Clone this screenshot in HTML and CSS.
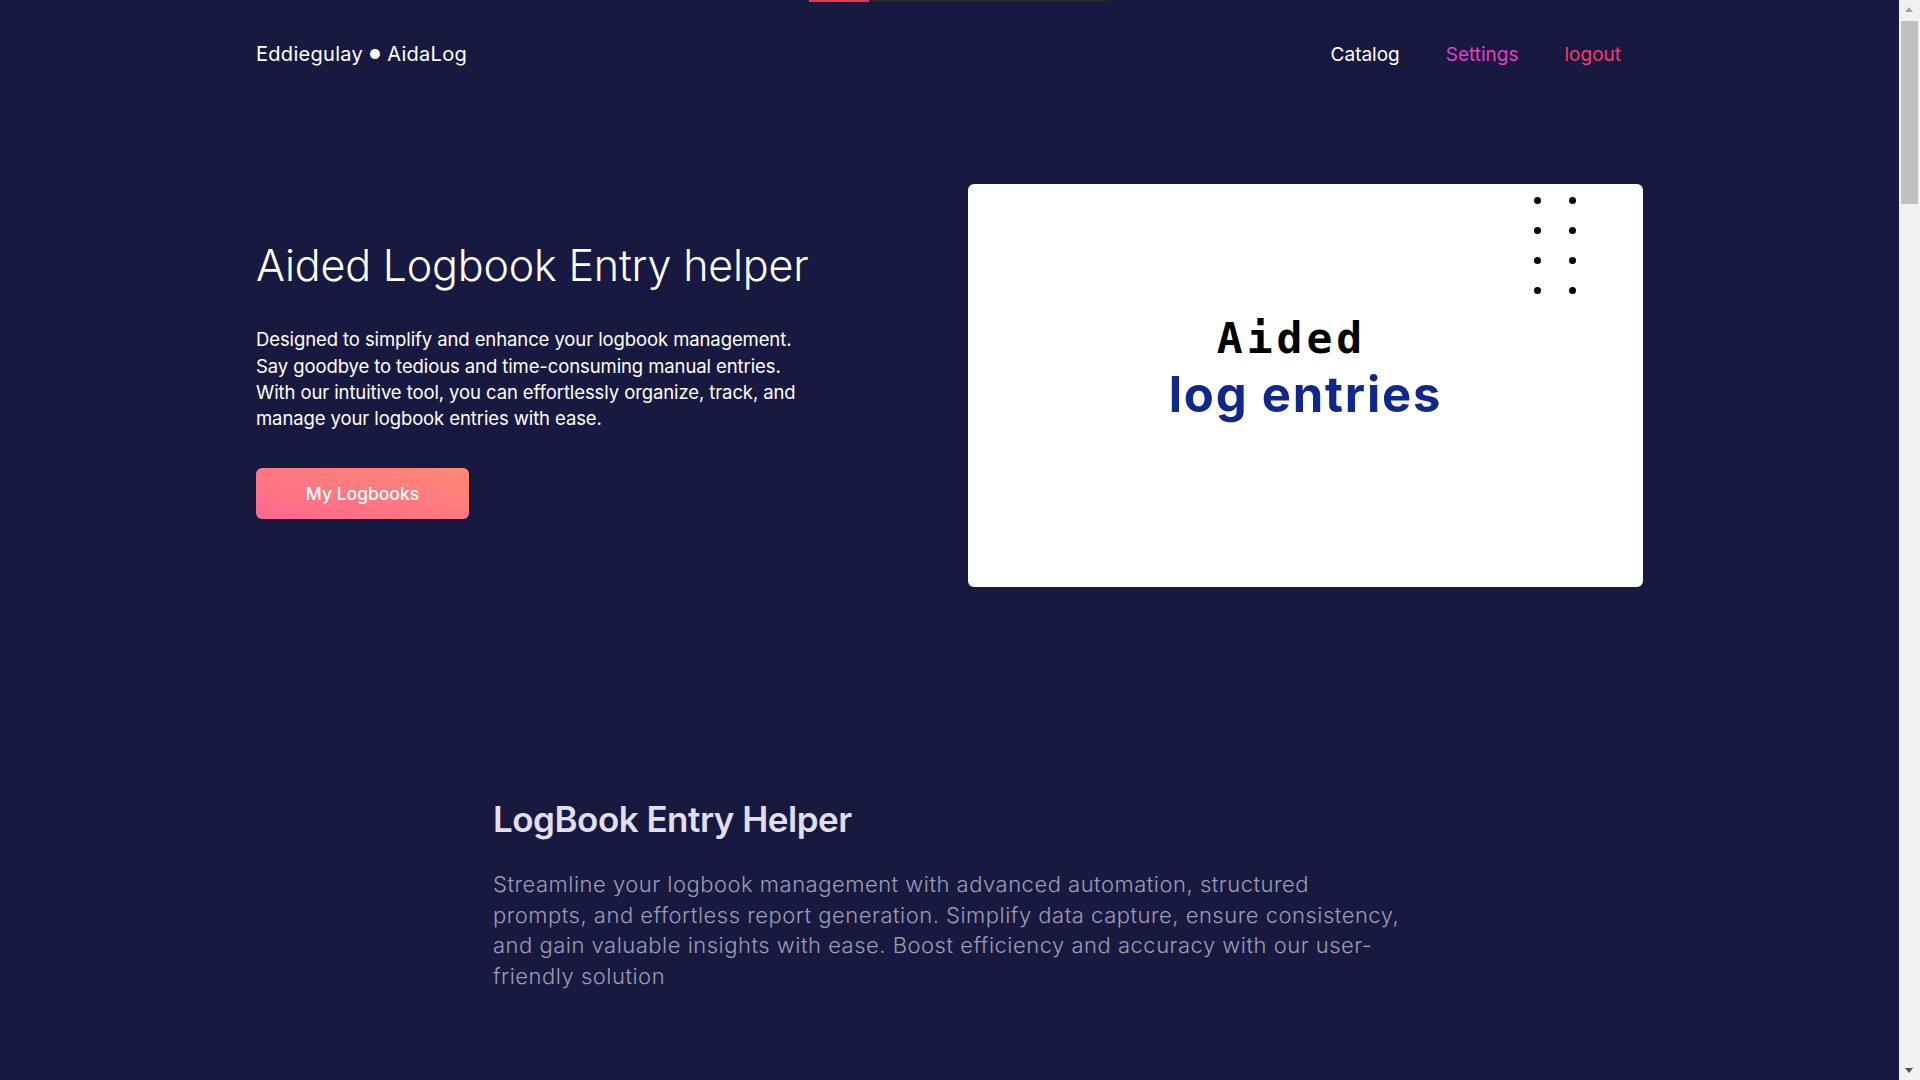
FILE: index.html
```html
<!DOCTYPE html>
<html lang="en">
<head>
<meta charset="utf-8">
<title>AidaLog</title>
<link rel="stylesheet" href="styles.css">
</head>
<body>
<div class="progress"><span class="progress-fill"></span></div>
<div class="scrollbar" aria-hidden="true">
  <span class="scroll-arrow scroll-up"></span>
  <span class="scroll-thumb"></span>
  <span class="scroll-arrow scroll-down"></span>
</div>
<div class="page">
  <header class="header container">
    <a class="brand" href="#">Eddiegulay <span class="brand-dot">●</span> AidaLog</a>
    <nav class="nav">
      <a class="nav-link nav-catalog" href="#">Catalog</a>
      <a class="nav-link nav-settings" href="#">Settings</a>
      <a class="nav-link nav-logout" href="#">logout</a>
    </nav>
  </header>

  <section class="hero container">
    <div class="hero-text">
      <h1 class="hero-title">Aided Logbook Entry helper</h1>
      <p class="hero-lead">Designed to simplify and enhance your logbook management. Say goodbye to tedious and time-consuming manual entries. With our intuitive tool, you can effortlessly organize, track, and manage your logbook entries with ease.</p>
      <a class="btn-primary" href="#">My Logbooks</a>
    </div>
    <div class="hero-card">
      <div class="dots">
        <span></span><span></span><span></span><span></span>
        <span></span><span></span><span></span><span></span>
      </div>
      <div class="card-mono">Aided</div>
      <div class="card-blue">log entries</div>
    </div>
  </section>

  <section class="feature">
    <h2 class="feature-title">LogBook Entry Helper</h2>
    <p class="feature-text">Streamline your logbook management with advanced automation, structured prompts, and effortless report generation. Simplify data capture, ensure consistency, and gain valuable insights with ease. Boost efficiency and accuracy with our user-friendly solution</p>
  </section>
</div>
</body>
</html>
```
FILE: styles.css
```css
* { box-sizing: border-box; }
html, body { margin: 0; padding: 0; }
body {
  background: #181940;
  color: #ffffff;
  font-family: "Inter", "Open Sans", sans-serif;
}
a { text-decoration: none; }

.progress {
  position: absolute;
  top: 0;
  left: 809px;
  width: 300px;
  height: 2px;
  background: #262628;
  z-index: 10;
}
.progress-fill {
  display: block;
  width: 60px;
  height: 100%;
  background: #e8364e;
}

.scrollbar {
  position: fixed;
  top: 0;
  right: 0;
  width: 21px;
  height: 100vh;
  background: #f1f1f1;
  z-index: 20;
}
.scroll-thumb {
  position: absolute;
  top: 21px;
  left: 2px;
  width: 17px;
  height: 183px;
  background: #c1c1c1;
}
.scroll-arrow {
  position: absolute;
  left: 6px;
  width: 0;
  height: 0;
  border-left: 4.5px solid transparent;
  border-right: 4.5px solid transparent;
}
.scroll-up {
  top: 7px;
  border-bottom: 5px solid #a3a3a3;
}
.scroll-down {
  bottom: 7px;
  border-top: 5px solid #505050;
}

.page { margin-right: 21px; }

.container {
  width: 1387px;
  margin: 0 auto;
}

.header {
  height: 108px;
  display: flex;
  align-items: center;
  justify-content: space-between;
}
.brand {
  color: #ffffff;
  font-size: 20px;
  font-weight: 400;
  letter-spacing: 0.3px;
}
.brand-dot { font-size: 13px; vertical-align: 2px; }
.nav {
  display: flex;
  gap: 46px;
  padding-right: 22px;
}
.nav-link { font-size: 19px; font-weight: 400; }
.nav-catalog { color: #ffffff; }
.nav-settings { color: #e23fc6; }
.nav-logout { color: #f23d6c; }

.hero {
  display: grid;
  grid-template-columns: 1fr 675px;
  align-items: center;
  padding-top: 76px;
}
.hero-text { padding-bottom: 13px; }
.hero-title {
  margin: 0;
  font-size: 43px;
  font-weight: 300;
  line-height: 52px;
  letter-spacing: -0.2px;
}
.hero-lead {
  width: 560px;
  margin: 35px 0 36px;
  font-size: 18.5px;
  line-height: 26.4px;
  font-weight: 400;
  letter-spacing: -0.1px;
}
.btn-primary {
  display: inline-flex;
  align-items: center;
  justify-content: center;
  width: 213px;
  height: 51px;
  border-radius: 6px;
  background: linear-gradient(to top right, #ff6790, #ff8a72);
  color: #ffffff;
  font-size: 17.5px;
  font-weight: 500;
}

.hero-card {
  position: relative;
  height: 403px;
  background: #ffffff;
  border-radius: 6px;
  padding-top: 133px;
  text-align: center;
}
.dots {
  position: absolute;
  top: 13px;
  left: 566px;
  display: grid;
  grid-template-columns: 7px 7px;
  column-gap: 28px;
  row-gap: 23px;
}
.dots span {
  width: 7px;
  height: 7px;
  border-radius: 50%;
  background: #000000;
}
.card-mono {
  font-family: "DejaVu Sans Mono", monospace;
  font-weight: 700;
  font-size: 43px;
  line-height: 43px;
  letter-spacing: 4px;
  color: #000000;
  padding-right: 28px;
}
.card-blue {
  margin-top: 10px;
  font-family: "Inter", sans-serif;
  font-weight: 700;
  font-size: 49px;
  line-height: 49px;
  letter-spacing: 1.8px;
  color: #12278b;
}

.feature {
  width: 913px;
  margin: 0 auto;
  padding-top: 211px;
  padding-bottom: 200px;
}
.feature-title {
  margin: 0;
  font-size: 35px;
  font-weight: 600;
  color: #e0dfee;
  letter-spacing: -0.5px;
}
.feature-text {
  margin: 29px 0 0;
  width: 912px;
  font-size: 22px;
  line-height: 30.6px;
  font-weight: 300;
  letter-spacing: 0.5px;
  color: #9d9cb4;
}
```
